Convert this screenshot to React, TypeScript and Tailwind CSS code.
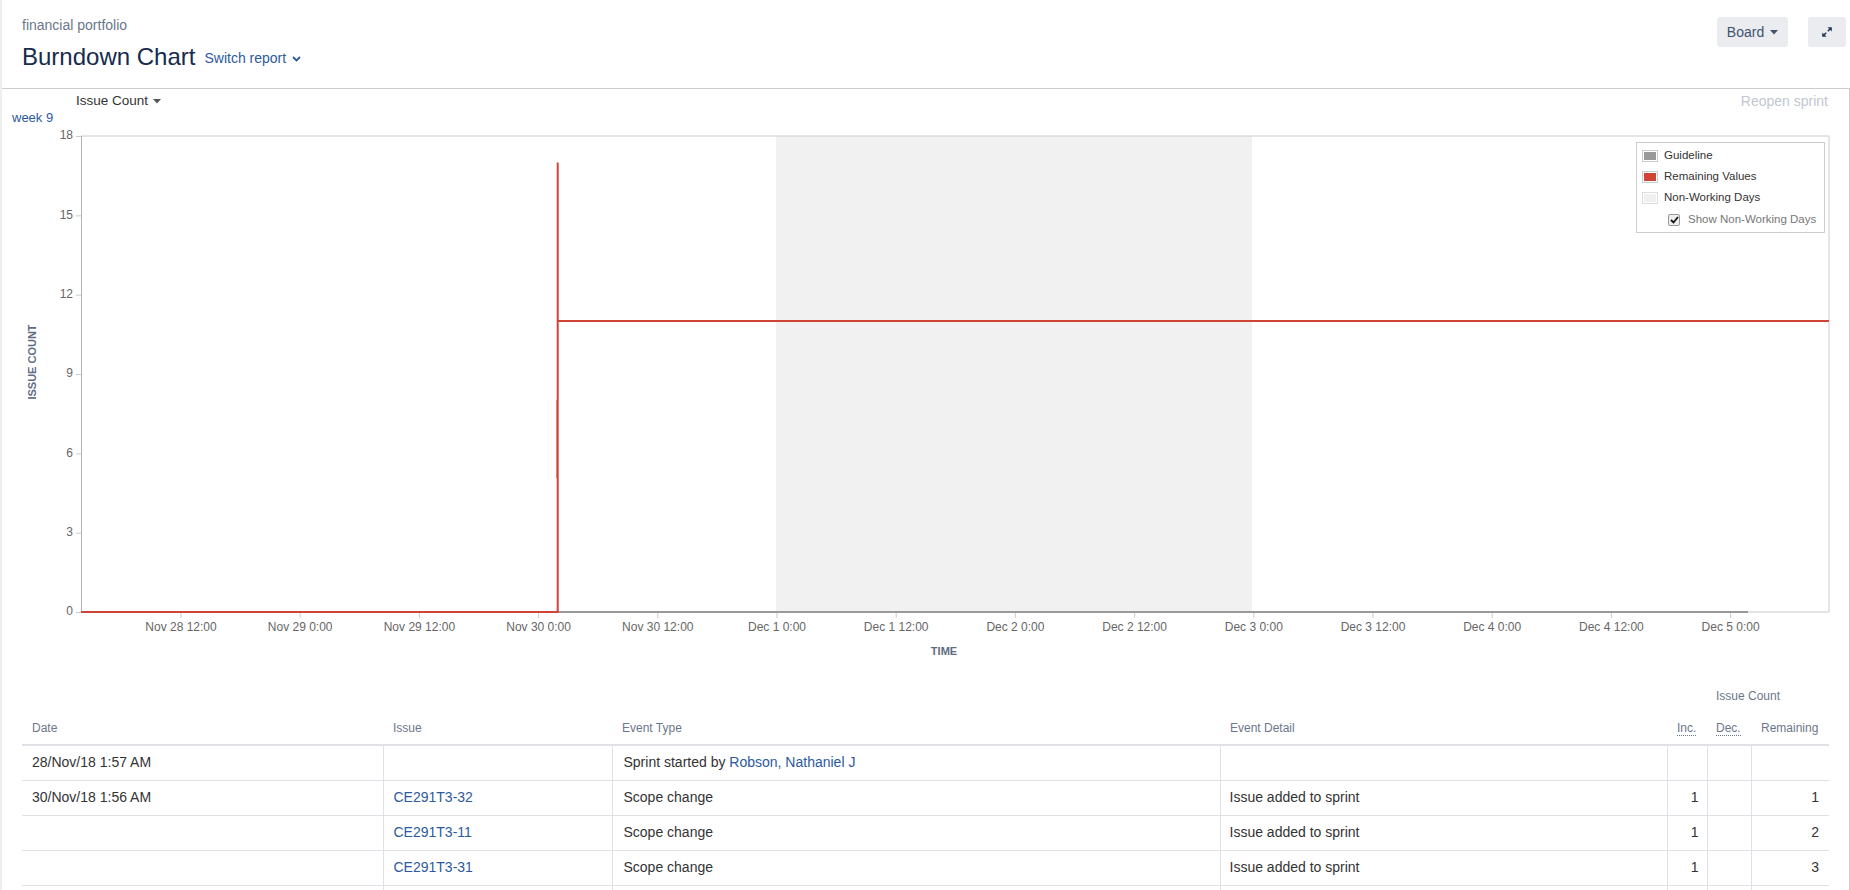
import React from "react"

// plot box in page pixels
const L = 81
const T = 136
const R = 1829
const B = 612
const yOf = (v: number) => B - (v * (B - T)) / 18
const tickX = (i: number) => 181 + i * 119.2

const xLabels = [
  "Nov 28 12:00",
  "Nov 29 0:00",
  "Nov 29 12:00",
  "Nov 30 0:00",
  "Nov 30 12:00",
  "Dec 1 0:00",
  "Dec 1 12:00",
  "Dec 2 0:00",
  "Dec 2 12:00",
  "Dec 3 0:00",
  "Dec 3 12:00",
  "Dec 4 0:00",
  "Dec 4 12:00",
  "Dec 5 0:00",
]

type Row = {
  date?: string
  issue?: string
  type?: React.ReactNode
  detail?: string
  inc?: string
  dec?: string
  remaining?: string
}

const rows: Row[] = [
  {
    date: "28/Nov/18 1:57 AM",
    type: (
      <>
        Sprint started by <span className="text-[#2c5aa0]">Robson, Nathaniel J</span>
      </>
    ),
  },
  { date: "30/Nov/18 1:56 AM", issue: "CE291T3-32", type: "Scope change", detail: "Issue added to sprint", inc: "1", remaining: "1" },
  { issue: "CE291T3-11", type: "Scope change", detail: "Issue added to sprint", inc: "1", remaining: "2" },
  { issue: "CE291T3-31", type: "Scope change", detail: "Issue added to sprint", inc: "1", remaining: "3" },
  // next row only shows its top edge in the window
  {},
]

function Caret({ className = "" }: { className?: string }) {
  return (
    <svg width="8" height="5" viewBox="0 0 8 5" className={className}>
      <path d="M0 0 H8 L4 4.5 Z" fill="currentColor" />
    </svg>
  )
}

function Chart() {
  return (
    <svg width={1847} height={542} viewBox="2 123 1847 542" className="block">
      {/* non-working days */}
      <rect x={776} y={T} width={1252 - 776} height={B - T} fill="#f1f1f1" />
      {/* plot frame */}
      <path d={`M${L} ${T} H${R} V${B} H${L}`} fill="none" stroke="#cccccc" strokeWidth={1} />
      <line x1={L + 0.5} y1={T} x2={L + 0.5} y2={B} stroke="#b3b3b3" strokeWidth={1} />

      {/* y ticks */}
      {[0, 3, 6, 9, 12, 15, 18].map((v) => (
        <g key={v}>
          <line x1={76} x2={L} y1={yOf(v) + 0.5} y2={yOf(v) + 0.5} stroke="#cccccc" />
          <text x={73} y={yOf(v)} textAnchor="end" dominantBaseline="middle" fontSize={12} fill="#666666">
            {v}
          </text>
        </g>
      ))}

      {/* x ticks */}
      {xLabels.map((lab, i) => (
        <g key={lab}>
          <line x1={tickX(i)} x2={tickX(i)} y1={B} y2={B + 6} stroke="#cccccc" />
          <text x={tickX(i)} y={628} textAnchor="middle" dominantBaseline="middle" fontSize={12} fill="#666666">
            {lab}
          </text>
        </g>
      ))}

      {/* guideline */}
      <line x1={L} x2={1748} y1={B} y2={B} stroke="#999999" strokeWidth={2} />
      {/* remaining values */}
      <path
        d={`M${L} ${B} H557.7 V162.5 M557.7 ${yOf(11)} H${R}`}
        fill="none"
        stroke="#d04437"
        strokeWidth={2}
      />
      <line x1={556.5} x2={556.5} y1={400} y2={478} stroke="#d04437" strokeOpacity={0.5} strokeWidth={1} />

      {/* axis titles */}
      <text x={944} y={652} textAnchor="middle" dominantBaseline="middle" fontSize={11} fontWeight={700} fill="#5e6c84">
        TIME
      </text>
      <text
        x={33}
        y={362}
        textAnchor="middle"
        dominantBaseline="middle"
        fontSize={11}
        fontWeight={700}
        fill="#5e6c84"
        transform="rotate(-90 33 362)"
      >
        ISSUE COUNT
      </text>
    </svg>
  )
}

function Legend() {
  return (
    <div className="absolute left-[1634px] top-[142px] w-[189px] h-[91px] border border-[#cccccc] bg-white pl-[5px] pt-[2px] text-[11.5px] text-[#333]">
      <div className="flex items-center h-[21px] gap-[6px]">
        <span className="w-[16px] h-[12px] border border-[#cccccc] p-[1px]">
          <span className="block w-full h-full bg-[#999999]" />
        </span>
        Guideline
      </div>
      <div className="flex items-center h-[21px] gap-[6px]">
        <span className="w-[16px] h-[12px] border border-[#cccccc] p-[1px]">
          <span className="block w-full h-full bg-[#d04437]" />
        </span>
        Remaining Values
      </div>
      <div className="flex items-center h-[21px] gap-[6px]">
        <span className="w-[16px] h-[12px] border border-[#dddddd] p-[1px]">
          <span className="block w-full h-full bg-[#f0f0f0]" />
        </span>
        Non-Working Days
      </div>
      <div className="flex items-center h-[23px] gap-[8px] pl-[26px] text-[#777]">
        <span className="w-[12px] h-[12px] border border-[#999] rounded-[2px] bg-[#eeeeee] flex items-center justify-center">
          <svg width="9" height="8" viewBox="0 0 9 8">
            <path d="M1 4 L3.5 6.5 L8 1" fill="none" stroke="#111" strokeWidth={1.8} />
          </svg>
        </span>
        Show Non-Working Days
      </div>
    </div>
  )
}

export default function App() {
  return (
    <div className="w-[1850px] h-[890px] overflow-hidden bg-white border-l-2 border-[#eeeeee] font-['Liberation_Sans',Arial,sans-serif] text-[#333] relative">
      {/* header */}
      <div className="h-[88px] flex justify-between">
        <div className="pl-[20px] pt-[16px]">
          <div className="text-[14px] leading-[19px] text-[#6b778c]">financial portfolio</div>
          <div className="mt-[7px] flex items-center h-[30px]">
            <h1 className="text-[24px] leading-[30px] text-[#172b4d]">Burndown Chart</h1>
            <button className="ml-[9px] mt-[3px] flex items-center gap-[6px] text-[14px] text-[#2c5aa0]">
              Switch report
              <svg width="9" height="6" viewBox="0 0 9 6">
                <path d="M1 1 L4.5 4.5 L8 1" fill="none" stroke="currentColor" strokeWidth={1.8} />
              </svg>
            </button>
          </div>
        </div>
        <div className="flex pt-[17px] pr-[4px] gap-[20px]">
          <button className="h-[30px] w-[71px] rounded-[3px] bg-[#ebecf0] flex items-center justify-center gap-[6px] text-[14px] text-[#42526e]">
            Board
            <Caret className="text-[#42526e]" />
          </button>
          <button className="h-[30px] w-[38px] rounded-[3px] bg-[#ebecf0] flex items-center justify-center">
            <svg width="12" height="12" viewBox="0 0 12 12">
              <path d="M6.5 1.2 H10.8 V5.5 Z" fill="#253858" />
              <path d="M9.6 2.4 L6.8 5.2" stroke="#253858" strokeWidth={1.5} />
              <path d="M1.2 6.5 V10.8 H5.5 Z" fill="#253858" />
              <path d="M2.4 9.6 L5.2 6.8" stroke="#253858" strokeWidth={1.5} />
            </svg>
          </button>
        </div>
      </div>

      {/* report panel */}
      <div className="border-t border-r border-[#cccccc] h-[820px] relative">
        <div className="h-[24px] flex items-center justify-between">
          <button className="ml-[74px] flex items-center gap-[5px] text-[13.5px] text-[#333]">
            Issue Count
            <Caret className="text-[#555]" />
          </button>
          <span className="mr-[21px] text-[14px] text-[#c1c7d0]">Reopen sprint</span>
        </div>
        <div className="h-[10px] pl-[10px] text-[13px] leading-[10px] text-[#2c5aa0]">week 9</div>

        <Chart />

        <table className="mt-[15px] ml-[20px] w-[1807px] table-fixed border-collapse text-[14px]">
          <colgroup>
            <col className="w-[361px]" />
            <col className="w-[229px]" />
            <col className="w-[608px]" />
            <col className="w-[447px]" />
            <col className="w-[40px]" />
            <col className="w-[44px]" />
            <col className="w-[78px]" />
          </colgroup>
          <thead className="text-[12px] text-[#6b778c]">
            <tr className="h-[31px]">
              <th colSpan={4} />
              <th colSpan={3} className="font-normal text-center align-middle">
                Issue Count
              </th>
            </tr>
            <tr className="h-[34px]">
              <th className="font-normal text-left px-[10px] border-b-2 border-[#dfe1e6]">Date</th>
              <th className="font-normal text-left px-[10px] border-b-2 border-[#dfe1e6]">Issue</th>
              <th className="font-normal text-left px-[10px] border-b-2 border-[#dfe1e6]">Event Type</th>
              <th className="font-normal text-left px-[10px] border-b-2 border-[#dfe1e6]">Event Detail</th>
              <th className="font-normal text-left pl-[10px] border-b-2 border-[#dfe1e6]">
                <abbr className="no-underline border-b border-dotted border-[#6b778c]">Inc.</abbr>
              </th>
              <th className="font-normal text-left pl-[9px] border-b-2 border-[#dfe1e6]">
                <abbr className="no-underline border-b border-dotted border-[#6b778c]">Dec.</abbr>
              </th>
              <th className="font-normal text-left pl-[10px] border-b-2 border-[#dfe1e6]">Remaining</th>
            </tr>
          </thead>
          <tbody>
            {rows.map((r, i) => (
              <tr key={i} className="h-[35px]">
                <td className="px-[10px] border-b border-[#dfe1e6]">{r.date}</td>
                <td className="px-[10px] border-b border-l border-[#dfe1e6] text-[#2c5aa0]">{r.issue}</td>
                <td className="px-[11px] border-b border-l border-[#dfe1e6]">{r.type}</td>
                <td className="px-[9px] border-b border-l border-[#dfe1e6]">{r.detail}</td>
                <td className="px-[8px] border-b border-l border-[#dfe1e6] text-right">{r.inc}</td>
                <td className="px-[8px] border-b border-l border-[#dfe1e6] text-right">{r.dec}</td>
                <td className="px-[10px] border-b border-l border-[#dfe1e6] text-right">{r.remaining}</td>
              </tr>
            ))}
          </tbody>
        </table>
      </div>

      <Legend />
    </div>
  )
}
